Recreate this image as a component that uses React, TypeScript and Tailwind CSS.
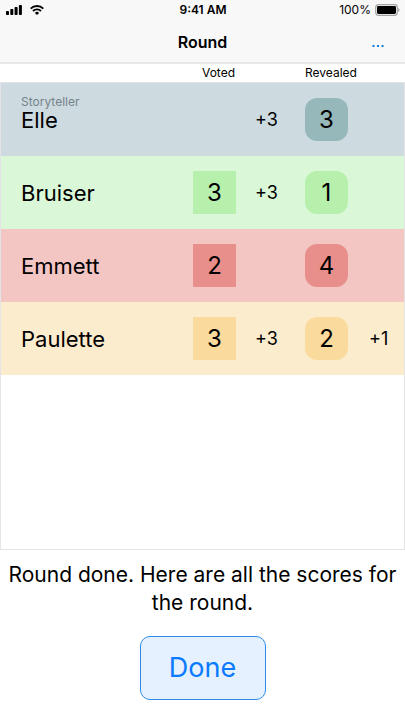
type Player = {
    name: string;
    role?: string;
    voted?: number;
    votedPoints?: string;
    revealed: number;
    revealedPoints?: string;
    rowColor: string;
    cardColor: string;
};

const players: Player[] = [
    { name: "Elle", role: "Storyteller", votedPoints: "+3", revealed: 3, rowColor: "bg-[#cddbe0]", cardColor: "bg-[#97b8bb]" },
    { name: "Bruiser", voted: 3, votedPoints: "+3", revealed: 1, rowColor: "bg-[#daf7d8]", cardColor: "bg-[#b6f0ac]" },
    { name: "Emmett", voted: 2, revealed: 4, rowColor: "bg-[#f3c6c4]", cardColor: "bg-[#e88f8b]" },
    { name: "Paulette", voted: 3, votedPoints: "+3", revealed: 2, revealedPoints: "+1", rowColor: "bg-[#fcecce]", cardColor: "bg-[#fadb9d]" },
];

const StatusBar = () => (
    <div className="grid h-5 grid-cols-3 items-center pr-[5px] pl-[6px] leading-5">
        <div className="flex items-center gap-2">
            <svg className="h-[10px] w-4" viewBox="0 0 16 10" fill="#000" aria-hidden="true">
                <rect x="0" y="6" width="3" height="4" rx="0.8" />
                <rect x="4.3" y="4" width="3" height="6" rx="0.8" />
                <rect x="8.6" y="2" width="3" height="8" rx="0.8" />
                <rect x="12.9" y="0" width="3" height="10" rx="0.8" />
            </svg>
            <svg className="h-[10px] w-[14px]" viewBox="0 0 14 10" fill="none" stroke="#000" strokeWidth="1.9" aria-hidden="true">
                <path d="M0.7 3.6a8.9 8.9 0 0 1 12.6 0" />
                <path d="M3 6a5.7 5.7 0 0 1 8 0" />
                <path d="M7 10L4.9 7.9a3 3 0 0 1 4.2 0z" fill="#000" stroke="none" />
            </svg>
        </div>
        <span className="text-center text-[12px] leading-5 font-semibold">9:41 AM</span>
        <div className="flex items-center justify-end gap-1">
            <span className="text-[12px] leading-5">100%</span>
            <svg className="h-3 w-[25px]" viewBox="0 0 25 12" aria-hidden="true">
                <rect x="0.7" y="0.7" width="21.6" height="10.6" rx="2.8" fill="#f8f8f8" stroke="#a3a3a3" strokeWidth="1.2" />
                <rect x="2" y="2" width="19" height="8" rx="1.4" fill="#000" />
                <path d="M23.2 4v4c1.8-.6 1.8-3.4 0-4z" fill="#a3a3a3" />
            </svg>
        </div>
    </div>
);

const ScoreRow = ({ player }: { player: Player }) => (
    <tr className={player.rowColor}>
        {/* the role label hangs above the name, so the name stays centred in the row */}
        <th scope="row" className={`h-[73px] border-l border-[#e4e4e6] p-0 pl-5 text-left font-normal ${player.role ? "pb-3" : ""}`}>
            {player.role && <div className="text-[12px] leading-3 text-[#74828a]">{player.role}</div>}
            <div className="text-[22px] leading-6">{player.name}</div>
        </th>
        <td className="p-0">
            {player.voted && (
                <div className={`flex size-[43px] items-center justify-center text-2xl ${player.cardColor}`}>{player.voted}</div>
            )}
        </td>
        <td className="p-0 pl-[19px] text-lg">{player.votedPoints}</td>
        <td className="p-0">
            <div className={`flex size-[43px] items-center justify-center rounded-xl text-2xl ${player.cardColor}`}>{player.revealed}</div>
        </td>
        <td className="border-r border-[#e4e4e6] p-0 pl-[21px] text-lg">{player.revealedPoints}</td>
    </tr>
);

export default function App() {
    return (
        <div className="flex min-h-screen flex-col bg-white font-['Inter',sans-serif] text-black">
            <header className="border-b-2 border-[#e6e7e9] bg-[#f8f8f8]">
                <StatusBar />
                <div className="grid h-[42px] grid-cols-3 items-center px-5 pt-[2px]">
                    <h1 className="col-start-2 text-center text-[16px] font-semibold">Round</h1>
                    <button type="button" aria-label="More options" className="justify-self-end text-[#0f7fe0]">
                        <svg className="h-4 w-[13px]" viewBox="0 0 13 16" fill="currentColor" aria-hidden="true">
                            <rect x="0.5" y="11" width="2" height="2" />
                            <rect x="5" y="11" width="2" height="2" />
                            <rect x="9.5" y="11" width="2" height="2" />
                        </svg>
                    </button>
                </div>
            </header>

            <main className="flex flex-1 flex-col">
                <table className="w-full table-fixed border-separate border-spacing-0">
                    <colgroup>
                        <col />
                        <col className="w-[43px]" />
                        <col className="w-[69px]" />
                        <col className="w-[43px]" />
                        <col className="w-[57px]" />
                    </colgroup>
                    <thead>
                        <tr className="text-left text-[12px] leading-[18px]">
                            <td className="border-b border-[#e4e4e6] p-0" />
                            <th scope="col" colSpan={2} className="border-b border-[#e4e4e6] p-0 pl-[9px] font-normal">Voted</th>
                            <th scope="col" colSpan={2} className="border-b border-[#e4e4e6] p-0 font-normal">Revealed</th>
                        </tr>
                    </thead>
                    <tbody>
                        {players.map((player) => (
                            <ScoreRow key={player.name} player={player} />
                        ))}
                    </tbody>
                </table>
                <div className="flex-1 border-x border-b border-[#e4e4e6]" />
            </main>

            <footer className="flex flex-col items-center px-1 pt-[11px] pb-5">
                <p className="text-center text-[21px] leading-7">Round done. Here are all the scores for the round.</p>
                <button type="button" className="mt-[19px] h-16 w-[126px] rounded-[10px] border border-[#2f8be6] bg-[#e5f1ff] text-[27px] text-[#0a7aff]">
                    Done
                </button>
            </footer>
        </div>
    );
}
